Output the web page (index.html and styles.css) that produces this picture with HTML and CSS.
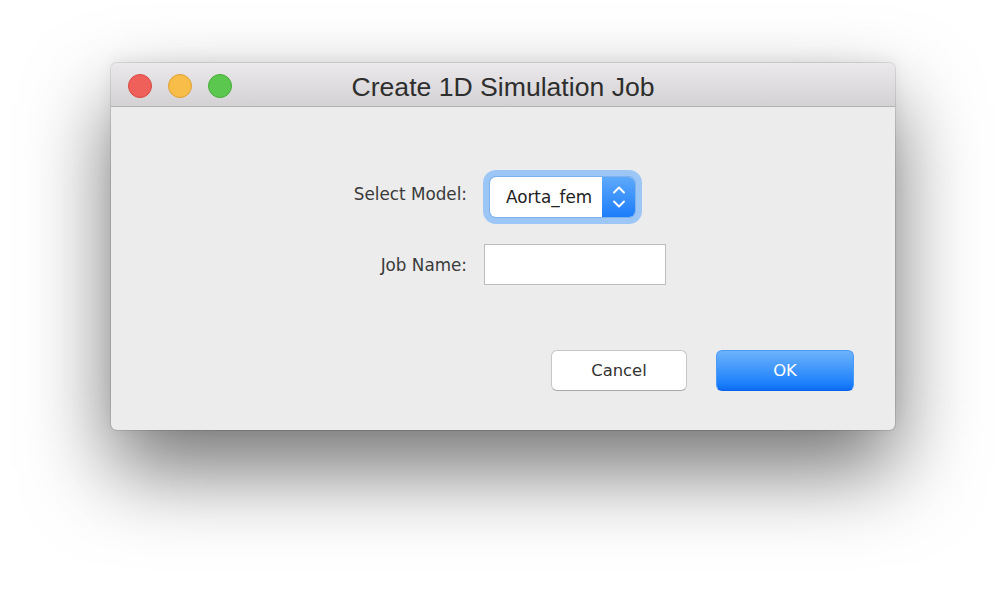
FILE: index.html
```html
<!DOCTYPE html>
<html>
<head>
<meta charset="utf-8">
<link rel="stylesheet" href="styles.css">
</head>
<body>
<div class="stage">
  <div class="window">
    <div class="titlebar">
      <div class="lights">
        <span class="light red"></span>
        <span class="light yellow"></span>
        <span class="light green"></span>
      </div>
      <div class="title">Create 1D Simulation Job</div>
      <div></div>
    </div>
    <div class="content">
      <div class="form">
        <label class="label label-model">Select Model:</label>
        <div class="popup">
          <span class="popup-text">Aorta_fem</span>
          <span class="popup-arrows">
            <svg width="14" height="24" viewBox="0 0 14 24">
              <path d="M2 7.5 L7 2.5 L12 7.5" fill="none" stroke="#fff" stroke-width="1.9" stroke-linecap="round" stroke-linejoin="round"/>
              <path d="M2 16.5 L7 21.5 L12 16.5" fill="none" stroke="#fff" stroke-width="1.9" stroke-linecap="round" stroke-linejoin="round"/>
            </svg>
          </span>
        </div>
        <label class="label label-job">Job Name:</label>
        <div class="input"></div>
      </div>
      <div class="buttons">
        <div class="btn cancel">Cancel</div>
        <div class="btn ok">OK</div>
      </div>
    </div>
  </div>
</div>
</body>
</html>
```
FILE: styles.css
```css
html, body {
  margin: 0;
  padding: 0;
  background: #ffffff;
}
body {
  font-family: "DejaVu Sans", sans-serif;
  width: 1006px;
  height: 590px;
  overflow: hidden;
}
.stage {
  padding: 63px 0 0 111px;
}
.window {
  width: 784px;
  height: 367px;
  box-sizing: border-box;
  background: #ececec;
  border-radius: 6px;
  box-shadow: 0 0 0 1px rgba(0,0,0,0.10), 0 -4px 16px rgba(0,0,0,0.06), 0 40px 84px rgba(0,0,0,0.55);
  display: flex;
  flex-direction: column;
}
.titlebar {
  height: 43px;
  border-bottom: 1px solid #b4b4b4;
  border-radius: 6px 6px 0 0;
  background: linear-gradient(#ebe9eb, #d3d1d3);
  display: grid;
  grid-template-columns: 1fr auto 1fr;
  align-items: center;
}
.lights {
  display: flex;
  gap: 16px;
  padding-left: 17px;
  padding-top: 2px;
}
.light {
  width: 24px;
  height: 24px;
  border-radius: 50%;
  box-sizing: border-box;
}
.red { background: #f0605a; border: 1px solid #d9473f; }
.yellow { background: #f8bd48; border: 1px solid #dea032; }
.green { background: #5cc74f; border: 1px solid #47ad39; }
.title {
  font-family: "Liberation Sans", Arial, sans-serif;
  font-size: 26.6px;
  color: #2e2e2e;
  padding-top: 6px;
}
.content {
  flex: 1;
  display: flex;
  flex-direction: column;
  padding-top: 70px;
}
.form {
  display: grid;
  grid-template-columns: 356px auto;
  column-gap: 17px;
  row-gap: 27px;
  align-items: center;
  justify-items: start;
}
.label {
  justify-self: end;
  font-size: 16.8px;
  color: #3a3a3a;
}
.label-model { margin-top: -7px; }
.label-job { margin-top: 1px; }
.popup {
  margin-left: 6px;
  width: 145px;
  height: 40px;
  display: flex;
  border-radius: 6px;
  background: #ffffff;
  box-shadow: 0 0 0 1px #7fb1ec, 0 0 0 7px #9bc6f6;
}
.popup-text {
  flex: 1;
  font-size: 16.8px;
  color: #222;
  padding-left: 16px;
  line-height: 40px;
}
.popup-arrows {
  width: 33px;
  border-radius: 0 6px 6px 0;
  background: linear-gradient(#5ea9fb, #1b7dfb);
  display: flex;
  align-items: center;
  justify-content: center;
}
.popup-arrows svg { display: block; }
.input {
  width: 182px;
  height: 41px;
  box-sizing: border-box;
  background: #ffffff;
  border: 1.5px solid #bdbdbd;
}
.buttons {
  display: flex;
  justify-content: flex-end;
  gap: 29px;
  padding-right: 41px;
  margin-top: 65px;
}
.btn {
  height: 41px;
  box-sizing: border-box;
  border-radius: 6px;
  display: flex;
  align-items: center;
  justify-content: center;
  font-size: 16.4px;
}
.cancel {
  width: 136px;
  background: #ffffff;
  border: 1px solid #c6c6c6;
  border-bottom-color: #a9a9a9;
  color: #333;
}
.ok {
  width: 138px;
  background: linear-gradient(#6db3fb, #1b7ffb 85%, #0d6cf3);
  border: 1px solid #4b9af6;
  border-bottom-color: #0b62e8;
  color: #ffffff;
}
```
